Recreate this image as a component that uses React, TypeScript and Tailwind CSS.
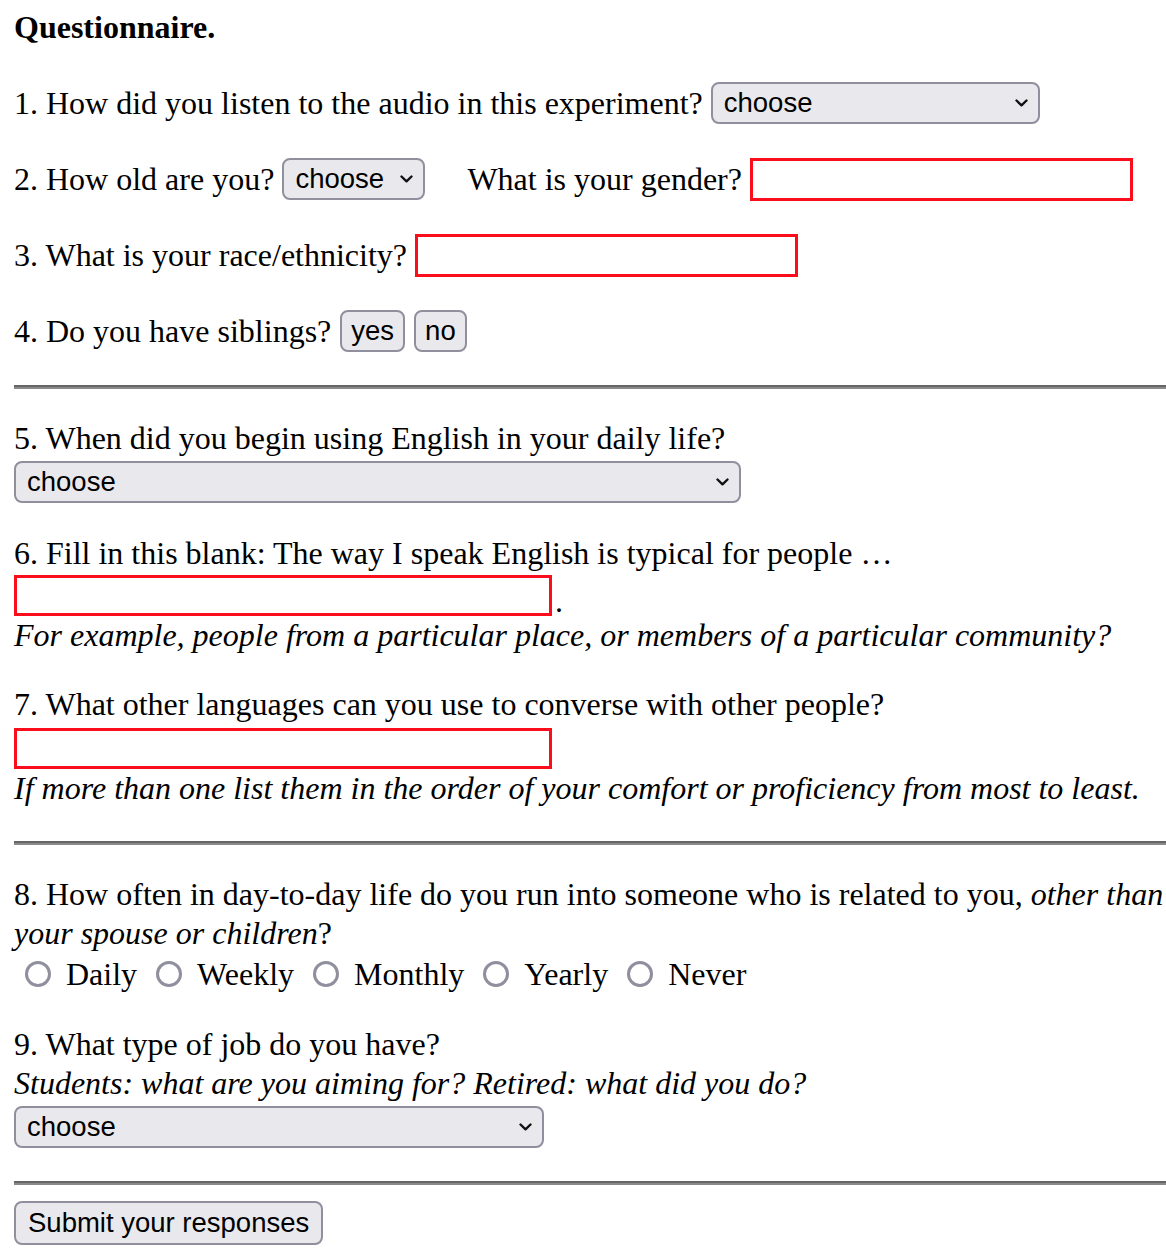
import type { ReactNode } from 'react'

const serif = { fontFamily: '"Liberation Serif", "Times New Roman", serif' }

function Chevron() {
  return (
    <svg width="13" height="8" viewBox="0 0 13 8" className="pointer-events-none absolute right-[12px] top-1/2 -translate-y-1/2">
      <path d="M1.5 1.5 L6.5 6.3 L11.5 1.5" fill="none" stroke="#111" strokeWidth="2.4" strokeLinecap="round" strokeLinejoin="round" />
    </svg>
  )
}

function Choose({ className }: { className: string }) {
  return (
    <div className={`relative shrink-0 ${className}`}>
      <select className="h-[42px] w-full appearance-none rounded-[8px] border-2 border-[#8f8f9d] bg-[#e9e9ed] pl-[11px] pr-[36px] font-['Liberation_Sans',Arial,sans-serif] text-[27.5px] leading-none text-black outline-none">
        <option>choose</option>
      </select>
      <Chevron />
    </div>
  )
}

function RedInput({ className }: { className: string }) {
  return <input type="text" className={`shrink-0 border-[3px] border-[#fb0d1b] bg-white outline-none ${className}`} />
}

function GrayButton({ children, className = '' }: { children: ReactNode; className?: string }) {
  return (
    <button className={`h-[42px] rounded-[8px] border-2 border-[#8f8f9d] bg-[#e9e9ed] px-[9px] font-['Liberation_Sans',Arial,sans-serif] text-[27.5px] leading-none text-black ${className}`}>
      {children}
    </button>
  )
}

function Rule() {
  return <div className="h-[4px] border-t-2 border-b-2 border-t-[#666] border-b-[#8a8a8a]" />
}

function Radio({ label }: { label: string }) {
  return (
    <label className="flex items-center">
      <span className="ml-[11px] mr-[15px] h-[26px] w-[26px] rounded-full border-[3px] border-[#8f8f9d] bg-white" />
      {label}
    </label>
  )
}

export default function App() {
  return (
    <div className="min-h-[1250px] bg-white pl-[14px] text-[32px] leading-[39px] text-black" style={serif}>
      <h1 className="pt-[8px] font-bold">Questionnaire.</h1>

      <div className="mt-[35px] flex h-[42px] items-center">
        <span>1. How did you listen to the audio in this experiment?</span>
        <Choose className="ml-[8px] w-[329px]" />
      </div>

      <div className="mt-[34px] flex h-[42px] items-center">
        <span>2. How old are you?</span>
        <Choose className="ml-[8px] w-[143px]" />
        <span className="ml-[42px]">What is your gender?</span>
        <RedInput className="ml-[8px] h-[43px] w-[383px]" />
      </div>

      <div className="mt-[34px] flex h-[42px] items-center">
        <span>3. What is your race/ethnicity?</span>
        <RedInput className="ml-[8px] h-[43px] w-[383px]" />
      </div>

      <div className="mt-[34px] flex h-[42px] items-center">
        <span>4. Do you have siblings?</span>
        <GrayButton className="ml-[9px]">yes</GrayButton>
        <GrayButton className="ml-[9px]">no</GrayButton>
      </div>

      <div className="mt-[33px]">
        <Rule />
      </div>

      <p className="mt-[30px]">5. When did you begin using English in your daily life?</p>
      <Choose className="mt-[3px] w-[727px]" />

      <p className="mt-[31px]">6. Fill in this blank: The way I speak English is typical for people …</p>
      <div className="mt-[2px] flex items-end">
        <RedInput className="h-[41px] w-[538px]" />
        <span className="ml-[3px] leading-[30px]">.</span>
      </div>
      <p className="italic">For example, people from a particular place, or members of a particular community?</p>

      <p className="mt-[30px]">7. What other languages can you use to converse with other people?</p>
      <RedInput className="mt-[4px] block h-[41px] w-[538px]" />
      <p className="italic">If more than one list them in the order of your comfort or proficiency from most to least.</p>

      <div className="mt-[33px]">
        <Rule />
      </div>

      <p className="mt-[30px]">
        8. How often in day-to-day life do you run into someone who is related to you, <i>other than</i>
        <br />
        <i>your spouse or children</i>?
      </p>
      <div className="flex h-[42px] items-center gap-[8px]">
        <Radio label="Daily" />
        <Radio label="Weekly" />
        <Radio label="Monthly" />
        <Radio label="Yearly" />
        <Radio label="Never" />
      </div>

      <p className="mt-[30px]">9. What type of job do you have?</p>
      <p className="italic">Students: what are you aiming for? Retired: what did you do?</p>
      <Choose className="mt-[3px] w-[530px]" />

      <div className="mt-[33px]">
        <Rule />
      </div>

      <GrayButton className="mt-[16px] h-[44px] px-[12px]">Submit your responses</GrayButton>
    </div>
  )
}
